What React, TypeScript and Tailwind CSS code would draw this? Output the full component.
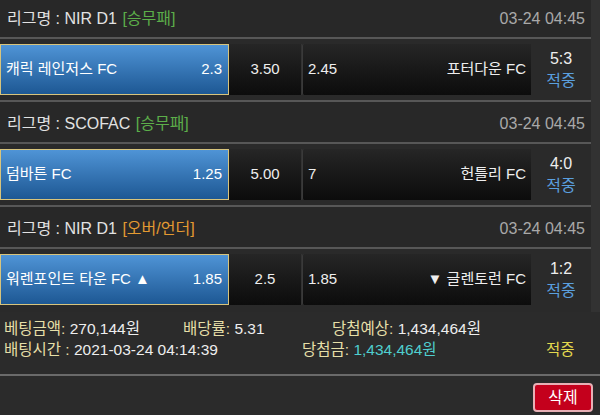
import React from "react";

type Game = {
  league: string;
  type: string;
  typeColor: string;
  date: string;
  home: string;
  homeOdds: string;
  draw: string;
  awayOdds: string;
  away: string;
  score: string;
};

const games: Game[] = [
  { league: "NIR D1", type: "[승무패]", typeColor: "text-[#5cae4a]", date: "03-24 04:45", home: "캐릭 레인저스 FC", homeOdds: "2.3", draw: "3.50", awayOdds: "2.45", away: "포터다운 FC", score: "5:3" },
  { league: "SCOFAC", type: "[승무패]", typeColor: "text-[#5cae4a]", date: "03-24 04:45", home: "덤바튼 FC", homeOdds: "1.25", draw: "5.00", awayOdds: "7", away: "헌틀리 FC", score: "4:0" },
  { league: "NIR D1", type: "[오버/언더]", typeColor: "text-[#e39a32]", date: "03-24 04:45", home: "워렌포인트 타운 FC ▲", homeOdds: "1.85", draw: "2.5", awayOdds: "1.85", away: "▼ 글렌토런 FC", score: "1:2" },
];

function GameBlock({ g, first, last }: { g: Game; first: boolean; last: boolean }) {
  return (
    <div>
      {/* 리그 헤더 */}
      <div className={`${first ? "h-[39px]" : "h-[42px] pt-[3px]"} flex items-center justify-between pl-[7px] pr-[6px] bg-[#282828] border-b-2 border-[#575757] text-[16px]`}>
        <span className="text-[#e2e2e2]">
          리그명 : {g.league} <span className={`ml-[1px] ${g.typeColor}`}>{g.type}</span>
        </span>
        <span className="text-[#a9a9a9]">{g.date}</span>
      </div>
      {/* 배팅 라인 */}
      <div className={`${last ? "h-[63px] pb-[2px]" : "h-[63px] border-b-2 border-[#575757]"} flex items-center bg-[#2a2a2a] text-[15px]`}>
        <div className="w-[229px] h-[51px] flex items-center justify-between pl-[5px] pr-[6px] border border-[#d8c47c] bg-gradient-to-b from-[#4f94d6] to-[#1d5894] text-white">
          <span>{g.home}</span>
          <span>{g.homeOdds}</span>
        </div>
        <div className="w-[73px] h-[51px] flex items-center justify-center bg-gradient-to-b from-[#262626] to-[#0c0c0c] text-[#eeeeee] border-r border-[#333]">
          {g.draw}
        </div>
        <div className="w-[229px] h-[51px] flex items-center justify-between pl-[5px] pr-[5px] bg-gradient-to-b from-[#262626] to-[#0c0c0c] text-[#eeeeee] border-l border-[#3a3a3a] rounded-l-[2px]">
          <span>{g.awayOdds}</span>
          <span>{g.away}</span>
        </div>
        <div className="flex-1 flex flex-col items-center leading-[22px] text-[16px]">
          <span className="text-[#eeeeee]">{g.score}</span>
          <span className="text-[#5a9fde]">적중</span>
        </div>
      </div>
    </div>
  );
}

export default function App() {
  return (
    <div className="w-[600px] h-[415px] bg-[#2b2b2b] overflow-hidden" style={{ fontFamily: '"Liberation Sans", "Noto Sans CJK KR", sans-serif' }}>
      <div className="flex">
        <div className="w-[591px]">
          {games.map((g, i) => <GameBlock key={i} g={g} first={i === 0} last={i === games.length - 1} />)}
        </div>
        <div className="flex-1 bg-[#323232]" />
      </div>

      {/* 요약 */}
      <div className="h-[64px] pt-[6px] pl-[4px] text-[15.5px] leading-[21px] border-b-2 border-[#6a6a6a]">
        <div className="flex">
          <span className="w-[179px]"><span className="text-[#e6dfa8]">베팅금액:</span> <span className="text-[#eeeeee]">270,144원</span></span>
          <span className="w-[149px]"><span className="text-[#e6dfa8]">배당률:</span> <span className="text-[#eeeeee]">5.31</span></span>
          <span><span className="text-[#e6dfa8]">당첨예상:</span> <span className="text-[#eeeeee]">1,434,464원</span></span>
        </div>
        <div className="flex">
          <span className="w-[298px]"><span className="text-[#e6dfa8]">배팅시간 :</span> <span className="text-[#eeeeee]">2021-03-24 04:14:39</span></span>
          <span className="w-[244px]"><span className="text-[#e6dfa8]">당첨금:</span> <span className="text-[#4fcfcf]">1,434,464원</span></span>
          <span className="text-[#e2d84e]">적중</span>
        </div>
      </div>

      {/* 삭제 */}
      <div className="flex justify-end pt-[7px] pr-[7px]">
        <button className="w-[60px] h-[29px] rounded-[4px] bg-[#c4001c] border-2 border-[#e8b0b6] text-white text-[16px] flex items-center justify-center">
          삭제
        </button>
      </div>
    </div>
  );
}
